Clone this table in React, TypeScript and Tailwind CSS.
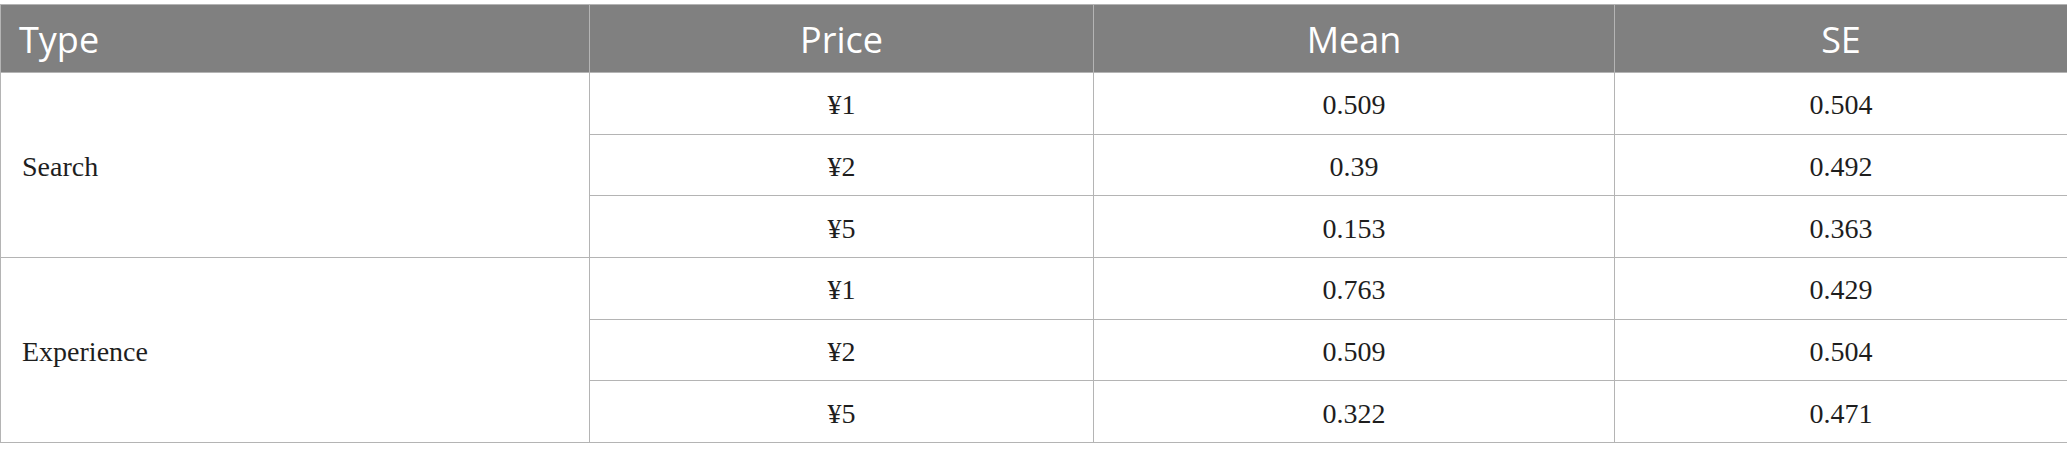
const rows = [
  { type: 'Search', items: [['¥1', '0.509', '0.504'], ['¥2', '0.39', '0.492'], ['¥5', '0.153', '0.363']] },
  { type: 'Experience', items: [['¥1', '0.763', '0.429'], ['¥2', '0.509', '0.504'], ['¥5', '0.322', '0.471']] },
];

export default function App() {
  return (
    <div className="w-[2067px] bg-white pt-1">
      <table className="w-[2067px] table-fixed border-collapse">
        <colgroup>
          <col className="w-[589px]" />
          <col className="w-[504px]" />
          <col className="w-[521px]" />
          <col className="w-[453px]" />
        </colgroup>
        <thead>
          <tr className="h-[68px] bg-[#808080] text-white font-['Open_Sans',sans-serif] text-[36px] font-normal">
            <th className="border border-[#b4b4b4] pl-[18px] pt-[2px] text-left font-normal">Type</th>
            <th className="border border-[#b4b4b4] pt-[2px] text-center font-normal">Price</th>
            <th className="border border-[#b4b4b4] pt-[2px] text-center font-normal">Mean</th>
            <th className="border border-[#b4b4b4] pt-[2px] text-center font-normal">SE</th>
          </tr>
        </thead>
        <tbody className="font-['Liberation_Serif',serif] text-[28px] text-[#1e1e1e]">
          {rows.map((g) =>
            g.items.map((r, i) => (
              <tr key={g.type + i} className="h-[61.67px]">
                {i === 0 && (
                  <td rowSpan={3} className="border border-[#b4b4b4] pl-[21px] pt-[4px] text-left">
                    {g.type}
                  </td>
                )}
                <td className="border border-[#b4b4b4] pt-[4px] text-center">{r[0]}</td>
                <td className="border border-[#b4b4b4] pt-[4px] text-center">{r[1]}</td>
                <td className="border border-[#b4b4b4] pt-[4px] text-center">{r[2]}</td>
              </tr>
            ))
          )}
        </tbody>
      </table>
    </div>
  );
}
